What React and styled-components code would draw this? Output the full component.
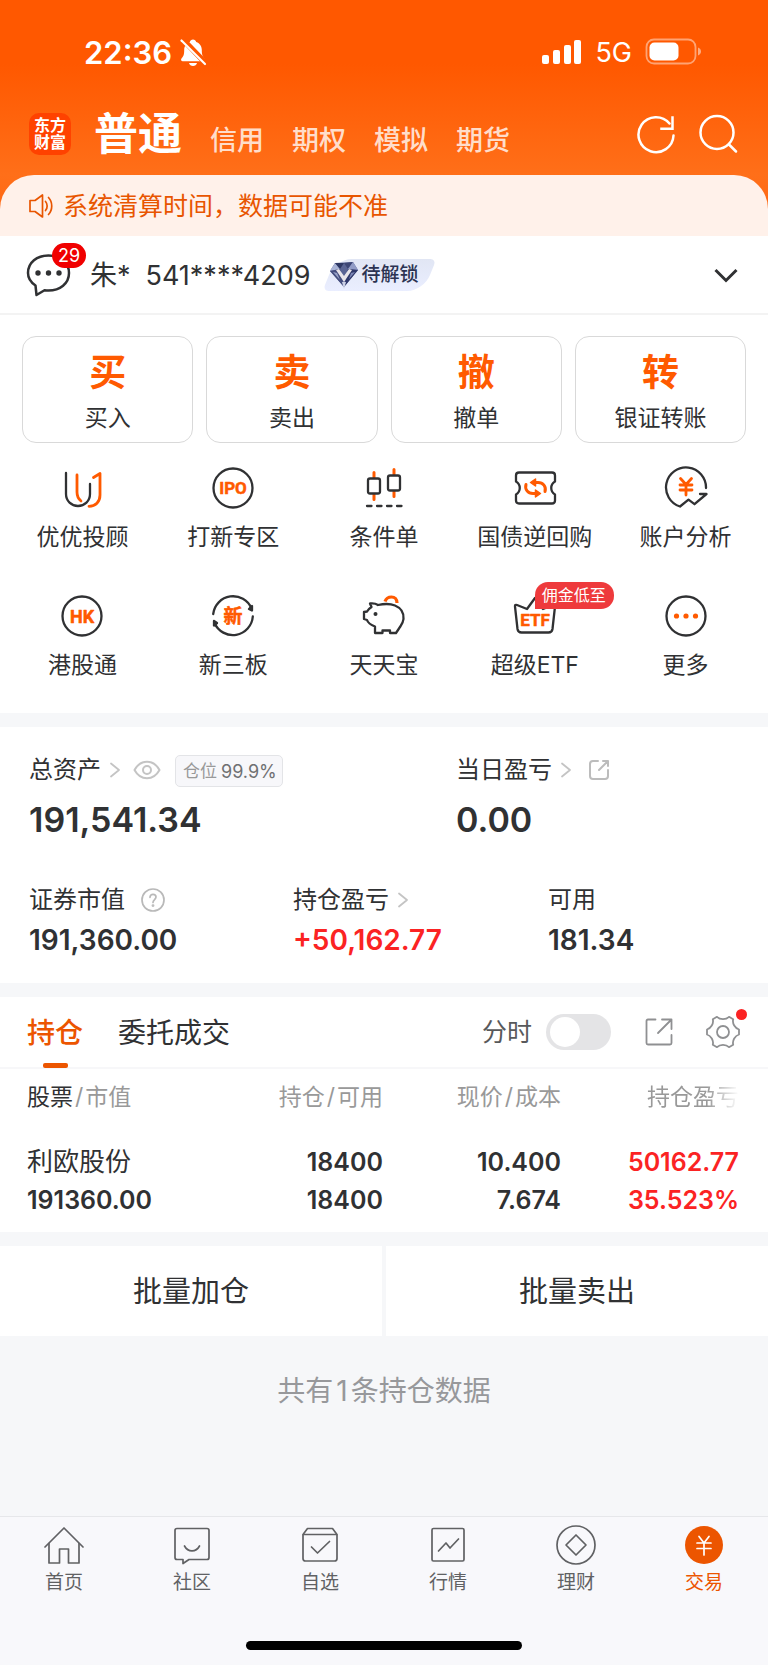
import React, { useState } from "react";
import styled, { createGlobalStyle, css } from "styled-components";

const FONT = 'Inter, "Noto Sans CJK SC", sans-serif';
const INK = "#303133";
const ORANGE = "#ff5a00";
const ACCENT = "#ec5500";
const RED = "#fb2323";
const BAND = "#f6f7f9";

const GlobalStyle = createGlobalStyle`
  *, *::before, *::after { box-sizing: border-box; }
  body { margin: 0; background: ${BAND}; color: ${INK}; font-family: ${FONT}; }
  button, input { font: inherit; color: inherit; margin: 0; }
  button { border: 0; padding: 0; background: none; cursor: pointer; }
  a { color: inherit; text-decoration: none; }
  svg { display: block; flex: none; }
`;

const Page = styled.div`
  display: flex;
  flex-direction: column;
  min-height: 100vh;
`;

/* Header */

const Header = styled.header`
  background: linear-gradient(#ff5800 0, #ff5800 64px, #ff6f19 175px, #ff6410 236px);
`;

const StatusBar = styled.div`
  display: flex;
  align-items: center;
  justify-content: space-between;
  height: 104px;
  padding: 0 66px 0 84px;
  color: #fff;
`;

const StatusGroup = styled.div`
  display: flex;
  align-items: center;
  gap: ${(p) => p.$gap}px;
`;

const Clock = styled.span`
  padding-top: 2px;
  font-size: 31px;
  line-height: 36px;
  font-weight: 600;
`;

const Network = styled.span`
  padding-top: 2px;
  font-size: 27px;
  line-height: 36px;
  font-weight: 400;
`;

const Nav = styled.nav`
  display: flex;
  align-items: center;
  height: 71px;
  padding: 0 30px 11px 29px;
`;

const Logo = styled.a`
  display: flex;
  align-items: center;
  justify-content: center;
  width: 42px;
  height: 42px;
  border-radius: 10px;
  background: #ff4200;
  color: #fff;
  font-size: 16px;
  line-height: 17px;
  font-weight: 700;
  text-align: center;
`;

const AccountTabs = styled.div`
  display: flex;
  align-items: baseline;
  flex: 1;
  gap: 28px;
  margin-left: 23px;
  padding-top: 7px;
`;

const AccountTab = styled.button`
  color: ${(p) => (p.$active ? "#fff" : "rgba(255,255,255,.8)")};
  font-size: ${(p) => (p.$active ? 44 : 27)}px;
  line-height: 58px;
  font-weight: ${(p) => (p.$active ? 700 : 500)};
`;

const NavActions = styled.div`
  display: flex;
  gap: 22px;
`;

const Notice = styled.div`
  display: flex;
  align-items: center;
  gap: 9px;
  height: 61px;
  padding: 0 28px;
  border-radius: 34px 34px 0 0;
  background: #fff1ea;
  color: #e85500;
  font-size: 25px;
  line-height: 32px;
`;

/* Account */

const Panel = styled.section`
  background: #fff;
  margin-bottom: 14px;
`;

const Account = styled.div`
  display: flex;
  align-items: center;
  height: 79px;
  padding: 0 29px 0 26px;
  border-bottom: 2px solid #f3f3f3;
`;

const Messages = styled.button`
  position: relative;
`;

const Count = styled.span`
  position: absolute;
  left: 26px;
  top: -9px;
  height: 25px;
  padding: 0 6px;
  border-radius: 13px;
  background: #f00000;
  color: #fff;
  font-size: 18px;
  line-height: 25px;
`;

const AccountName = styled.div`
  display: flex;
  gap: 15px;
  flex: none;
  margin-left: 18px;
  padding-top: 2px;
  font-size: 27px;
  line-height: 36px;
`;

const Level = styled.button`
  position: relative;
  display: flex;
  align-items: center;
  gap: 2px;
  height: 32px;
  margin: 0 auto 0 15px;
  padding: 0 16px 0 4px;
  color: #2c3352;
  font-size: 19px;
  line-height: 32px;
  font-weight: 500;
  isolation: isolate;

  &::before {
    content: "";
    position: absolute;
    z-index: -1;
    inset: 0 4px;
    border-radius: 16px 6px 16px 6px;
    background: linear-gradient(#e1e6f4, #eaeeff);
    transform: skewX(-22deg);
  }
`;

/* Trading shortcuts */

const TradeRow = styled.div`
  display: grid;
  grid-template-columns: repeat(4, 1fr);
  gap: 13px;
  padding: 21px 22px 0;
`;

const TradeCard = styled.button`
  display: flex;
  flex-direction: column;
  align-items: center;
  height: 107px;
  padding-top: 13px;
  border: 1px solid #d9d9d9;
  border-radius: 14px;
`;

const TradeMark = styled.span`
  color: ${ORANGE};
  font-size: 37px;
  line-height: 46px;
  font-weight: 700;
`;

const Label = styled.span`
  font-size: 23px;
  line-height: 32px;
`;

const TradeLabel = styled(Label)`
  margin-top: 6px;
`;

const Tools = styled.div`
  display: grid;
  grid-template-columns: repeat(5, 1fr);
  row-gap: 30px;
  padding: 23px 7px 21px;
`;

const Tool = styled.a`
  position: relative;
  display: flex;
  flex-direction: column;
  align-items: center;
  gap: 11px;
  height: 98px;
`;

const ToolIcon = styled.span`
  position: relative;
  height: 44px;
`;

const Promo = styled.span`
  position: absolute;
  left: 22px;
  top: -12px;
  height: 27px;
  padding: 0 8px 0 7px;
  border-radius: 13px 13px 13px 0;
  background: #ee3a3c;
  color: #fff;
  font-size: 16px;
  line-height: 27px;
  white-space: nowrap;
`;

/* Assets */

const Assets = styled(Panel)`
  padding: 25px 0 23px 29px;
`;

const Figures = styled.dl`
  display: grid;
  grid-template-columns: ${(p) => p.$columns};
  margin: 0;
`;

const FigureLabel = styled.dt`
  display: flex;
  align-items: center;
  height: 36px;
  font-size: 24px;
  line-height: 36px;

  svg { margin-left: 8px; }
`;

const IconButton = styled.button`
  svg { margin-left: ${(p) => p.$gap}px; }
`;

const FigureValue = styled.dd`
  margin: ${(p) => (p.$large ? "12px 0 42px" : "2px 0 0")};
  color: ${(p) => (p.$gain ? RED : INK)};
  font-size: ${(p) => (p.$large ? 34 : 28)}px;
  line-height: 40px;
  font-weight: 600;
`;

const Ratio = styled.span`
  display: flex;
  gap: 4px;
  height: 32px;
  margin: 2px 0 0 14px;
  padding: 0 5px 0 7px;
  border: 1px solid #e3e4e7;
  border-radius: 5px;
  background: #f7f7fa;
  color: #6f7072;
  font-size: 18px;
  line-height: 31px;
`;

const RatioName = styled.span`
  color: #999;
  font-size: 17px;
`;

/* Positions */

const TabRow = styled.div`
  display: flex;
  align-items: center;
  height: 72px;
  padding: 0 28px 0 27px;
  border-bottom: 2px solid #f7f7f9;
`;

const Tab = styled.button`
  position: relative;
  height: 71px;
  margin-right: 35px;
  font-size: 28px;
  line-height: 73px;
  ${(p) =>
    p.$active &&
    css`
      color: ${ACCENT};
      font-weight: 500;

      &::after {
        content: "";
        position: absolute;
        left: 50%;
        bottom: 0;
        width: 25px;
        height: 5px;
        margin-left: -12px;
        border-radius: 2px;
        background: ${ACCENT};
      }
    `}
`;

const SwitchLabel = styled.label`
  display: flex;
  align-items: center;
  gap: 14px;
  margin: 0 33px 0 auto;
  color: #58595b;
  font-size: 25px;
  line-height: 36px;
`;

const Switch = styled.input`
  appearance: none;
  width: 65px;
  height: 36px;
  border-radius: 18px;
  background: #e4e4e6;
  cursor: pointer;

  &::before {
    content: "";
    display: block;
    width: 30px;
    height: 30px;
    margin: 3px 4px;
    border-radius: 50%;
    background: #fff;
  }

  &:checked { background: ${ACCENT}; }
  &:checked::before { margin-left: 31px; }
`;

const Settings = styled.button`
  position: relative;
  margin-left: 32px;
`;

const Dot = styled.span`
  position: absolute;
  top: -6px;
  right: -7px;
  width: 11px;
  height: 11px;
  border-radius: 50%;
  background: ${RED};
`;

const TableWrap = styled.div`
  padding: 12px 29px 13px 27px;
`;

const Positions = styled.table`
  width: 100%;
  table-layout: fixed;
  border-collapse: collapse;
  text-align: right;

  th, td { padding: 0; white-space: nowrap; }
  th:first-child, td:first-child { text-align: left; }
`;

const Heading = styled.th`
  height: 32px;
  color: #999;
  font-size: 23px;
  line-height: 32px;
  font-weight: 400;
  ${(p) =>
    p.$fade &&
    css`
      mask-image: linear-gradient(to left, transparent, #000 32px);
    `}
`;

const Strong = styled.span`
  color: ${INK};
`;

const Slash = styled.span`
  margin: 0 2px;
`;

const Cell = styled.td`
  padding-top: 30px !important;
  color: ${(p) => (p.$gain ? RED : INK)};
  font-size: 25px;
  line-height: 38px;
  font-weight: 600;
`;

const Value = styled.div`
  height: 38px;
`;

const StockName = styled(Value)`
  font-size: 26px;
  font-weight: 400;
`;

const Bulk = styled.div`
  display: grid;
  grid-template-columns: 1fr 1fr;
  gap: 4px;
`;

const BulkButton = styled.button`
  height: 90px;
  padding-top: 2px;
  background: #fff;
  font-size: 29px;
  line-height: 36px;
`;

const Summary = styled.p`
  flex: 1;
  margin: 0;
  padding: 35px 0 60px;
  color: #97989b;
  font-size: 28px;
  line-height: 40px;
  text-align: center;
`;

const Total = styled.span`
  margin: 0 3px;
`;

/* Bottom navigation */

const BottomBar = styled.footer`
  border-top: 1px solid #e6e7ea;
  background: #f8f8fb;
`;

const BottomNav = styled.nav`
  display: grid;
  grid-template-columns: repeat(6, 1fr);
  padding-top: 8px;
`;

const BottomLink = styled.a`
  display: flex;
  flex-direction: column;
  align-items: center;
  gap: 6px;
  color: ${(p) => (p.$active ? ACCENT : "#606163")};
  font-size: 19px;
  line-height: 24px;
`;

const HomeIndicator = styled.div`
  width: 36%;
  height: 9px;
  margin: 46px auto 15px;
  border-radius: 5px;
  background: #000;
`;

/* Icons */

const Svg = ({ w, h = w, sw = 2, color = INK, children }) => (
  <svg
    width={w}
    height={h}
    viewBox={`0 0 ${w} ${h}`}
    fill="none"
    stroke={color}
    strokeWidth={sw}
    strokeLinecap="round"
    strokeLinejoin="round"
    aria-hidden="true"
  >
    {children}
  </svg>
);

const Word = ({ y = 28, size = 17, children }) => (
  <text
    x="22"
    y={y}
    textAnchor="middle"
    fill={ORANGE}
    stroke={ORANGE}
    strokeWidth=".5"
    fontFamily='Roboto, "Noto Sans CJK SC", sans-serif'
    fontWeight="700"
    fontSize={size}
  >
    {children}
  </text>
);

const MutedBell = () => (
  <Svg w={28} h={30} color="none">
    <g fill="#fff">
      <path d="M14 2.5c-1.6 0-2.8 1-3.2 2.4C7 6.200 5.200 9.400 5.200 13c0 5-1 6.600-2.700 8.400-.9 1-.4 2.800 1.200 2.800h20.600c1.600 0 2.100-1.800 1.200-2.800C23.800 19.600 22.800 18 22.800 13c0-3.600-1.800-6.800-5.600-8.100C16.800 3.500 15.600 2.500 14 2.500z" />
      <path d="M10 26h8c-.5 1.800-2 3-4 3s-3.500-1.200-4-3z" />
    </g>
    <path d="M3 1.500l24 25" stroke="#ff5800" strokeWidth="5.500" />
    <path d="M2.500 3.500l23.500 23.500" stroke="#fff" strokeWidth="2.200" />
  </Svg>
);

const Signal = () => (
  <Svg w={40} h={26} color="none">
    <g fill="#fff">
      <rect x="0" y="16" width="7" height="9" rx="2" />
      <rect x="11" y="11" width="7" height="14" rx="2" />
      <rect x="22" y="6" width="7" height="19" rx="2" />
      <rect x="32" y="1" width="7" height="24" rx="2" />
    </g>
  </Svg>
);

const Battery = () => (
  <Svg w={57} h={28} color="none">
    <rect x="1.500" y="1.500" width="49" height="24" rx="7.500" stroke="#fff" strokeOpacity=".45" strokeWidth="1.800" />
    <rect x="4.500" y="4.500" width="29" height="18" rx="5" fill="#fff" />
    <path d="M53 9.500c2 .8 3 2.200 3 4s-1 3.200-3 4z" fill="#fff" fillOpacity=".5" />
  </Svg>
);

const Refresh = () => (
  <Svg w={40} color="#fff" sw={2.5}>
    <path d="M37.500 21.500A17.500 17.500 0 1 1 33.500 9.500" />
    <path d="M36.500 3.500v11.300H25.500" strokeLinecap="square" strokeLinejoin="miter" />
  </Svg>
);

const Search = () => (
  <Svg w={40} color="#fff" sw={2.5}>
    <circle cx="19" cy="18.500" r="16.500" />
    <path d="M31 30.500l7 7" />
  </Svg>
);

const Speaker = () => (
  <Svg w={26} color="#e85500" sw={1.7}>
    <path d="M2 7.500h5L14.500 2v22L7 18.500H2z" />
    <path d="M17.500 8.500c2.200 2.500 2.200 6.500 0 9M20.500 4.500c4.300 4.500 4.300 12.500 0 17" />
  </Svg>
);

const Chat = () => (
  <Svg w={46} sw={2.5}>
    <path d="M9.500 33.500C5 30.500 2 26.200 2 21 2 10.500 11 3.500 22.500 3.500S43 10.500 43 21 34 38.500 22.500 38.500q-2 0-4-.3l-8 4.800z" />
    <g fill={INK} stroke="none">
      <circle cx="12" cy="21" r="2.700" />
      <circle cx="22.500" cy="21" r="2.700" />
      <circle cx="33" cy="21" r="2.700" />
    </g>
  </Svg>
);

const Diamond = () => (
  <Svg w={30} h={30} color="none">
    <path d="M6 3l18-1 5 8-14 17L1 11z" fill="#5a6494" />
    <path d="M6 3l5 6-10 2z" fill="#aab4d6" />
    <path d="M6 3h9l-4 6z" fill="#2e3763" />
    <path d="M15 3l9-1-5 7z" fill="#3d4675" />
    <path d="M24 2l5 8-10-1z" fill="#929cc6" />
    <path d="M1 11l10-2 4 18z" fill="#454e7e" />
    <path d="M4 12l4 1 3 7z" fill="#98a2c8" />
    <path d="M29 10l-10-1-4 18z" fill="#2f386a" />
    <path d="M26 12l-4 1-2 6z" fill="#7e88b8" />
    <path d="M10 9l5 7 5-7 3 1-8 12-8-12z" fill="#e9e5ea" />
    <path d="M13 22l2 7 2-7z" fill="#ccd1e6" />
  </Svg>
);

const ChevronDown = () => (
  <Svg w={26} sw={3}>
    <path d="M2.500 8L13 18.500 23.500 8" strokeLinecap="butt" strokeLinejoin="miter" />
  </Svg>
);

const Chevron = () => (
  <Svg w={12} h={18} color="#c4c4c4" sw={1.8}>
    <path d="M2 2.500l8 6.500-8 6.500" />
  </Svg>
);

const Eye = () => (
  <Svg w={28} h={20} color="#c4c4c4">
    <path d="M1.500 10C4.500 4.500 9 1.800 14 1.800S23.500 4.500 26.500 10C23.500 15.500 19 18.200 14 18.200S4.500 15.500 1.500 10z" />
    <circle cx="14" cy="10" r="4" />
  </Svg>
);

const Question = () => (
  <Svg w={24} color="#b9b9b9" sw={1.7}>
    <circle cx="12" cy="12" r="11" />
    <path d="M9 9.300C9 7.500 10.300 6.300 12 6.300s3 1.200 3 2.800c0 2.400-3 2.600-3 5.400" />
    <circle cx="12" cy="17.600" r=".6" />
  </Svg>
);

const ShareSmall = () => (
  <Svg w={22} color="#bcbcbc">
    <path d="M10 2H5C3 2 2 3 2 5v12c0 2 1 3 3 3h12c2 0 3-1 3-3v-6" />
    <path d="M11 11l9-9M15 2h5v5" />
  </Svg>
);

const Share = () => (
  <Svg w={30} color="#8f9092" sw={1.8}>
    <path d="M11.500 2.500H4q-1.500 0-1.500 1.500v22q0 1.500 1.500 1.500h22q1.500 0 1.500-1.500v-8" />
    <path d="M14 16L27.500 2.500M18 2.500h9.500V12" />
  </Svg>
);

const Gear = () => (
  <Svg w={34} color="#8f9092" sw={1.8}>
    <path d="M11 1.800c1.600 1.600 3.500 2.300 6 2.300s4.400-.7 6-2.300l4.200 2.400c-.6 2.300-.2 4.200 1 6.300 1.200 2 2.700 3.300 4.800 4v5c-2.100.7-3.600 2-4.800 4-1.200 2.100-1.600 4-1 6.300L23 32.200c-1.600-1.600-3.500-2.300-6-2.300s-4.400.7-6 2.300l-4.200-2.400c.6-2.300.2-4.200-1-6.300-1.200-2-2.700-3.300-4.800-4v-5c2.100-.7 3.600-2 4.800-4 1.200-2.100 1.600-4 1-6.300z" />
    <circle cx="17" cy="17" r="6" />
  </Svg>
);

const TOOL_STROKE = 2.3;

const toolIcons = {
  advisor: (
    <Svg w={44} sw={TOOL_STROKE}>
      <path d="M6 7v21c0 7 5.500 12 12 12s12-5 12-12V18" />
      <g stroke={ORANGE} strokeWidth="2.800">
        <path d="M17 9v17c0 4 1.500 7 4 9" />
        <path d="M33.500 11.500l6.500-4V29c0 7-4.500 11.300-11 11.300" />
      </g>
    </Svg>
  ),
  ipo: (
    <Svg w={44} sw={TOOL_STROKE}>
      <circle cx="22" cy="22" r="19.500" />
      <Word size={17}>IPO</Word>
    </Svg>
  ),
  orders: (
    <Svg w={44} sw={TOOL_STROKE}>
      <g stroke={ORANGE} strokeWidth="3">
        <path d="M12 6.500v5M12 28.500v5M32 3.500v5M32 25.500v5" />
      </g>
      <rect x="6" y="12.500" width="12" height="15" rx="2" />
      <rect x="26" y="9.500" width="12" height="15" rx="2" />
      <path d="M5 40h35" strokeDasharray="4.500 5.500" />
    </Svg>
  ),
  repo: (
    <Svg w={44} sw={TOOL_STROKE}>
      <path d="M6 6.500h33c2 0 3 1 3 3v6c-5 3-5 10 0 13v6c0 2-1 3-3 3H6c-2 0-3-1-3-3v-6c5-3 5-10 0-13v-6c0-2 1-3 3-3z" />
      <g stroke={ORANGE} strokeWidth="3">
        <path d="M32 25.500c1.500-5-2-9-7-9h-3M13 18.500c-1.500 5 2 9 7 9h3" />
        <path d="M22.500 13v7l-5-3.500zM22.500 24v7l5-3.500z" fill={ORANGE} strokeWidth="1.500" />
      </g>
    </Svg>
  ),
  analysis: (
    <Svg w={44} sw={TOOL_STROKE}>
      <path d="M42 22A20 20 0 1 0 16 40.500l8.500-6.800 6 4.500L42.500 28H36" />
      <path d="M16.500 12.500l5.500 6 5.500-6M22 18.500V29M16 19h12M16 24h12" stroke={ORANGE} strokeWidth="2.800" />
    </Svg>
  ),
  hk: (
    <Svg w={44} sw={TOOL_STROKE}>
      <circle cx="22" cy="22" r="19.500" />
      <Word size={18} y={28.5}>HK</Word>
    </Svg>
  ),
  neeq: (
    <Svg w={44} sw={TOOL_STROKE}>
      <path d="M2.200 20A20 20 0 0 1 40.500 14.500M41.800 22.500A20 20 0 0 1 3.500 29" />
      <path d="M41 12v4.500l-3-1.500zM3 31.500V27l3 2z" fill={INK} />
      <Word size={19} y={29}>新</Word>
    </Svg>
  ),
  piggy: (
    <Svg w={44} sw={TOOL_STROKE}>
      <path d="M23 7.500C24 4.500 26.500 3 29.500 3c3.300 0 5.500 2.500 5.500 6" stroke={ORANGE} strokeWidth="3.200" strokeLinecap="butt" />
      <path d="M8 9.500c4-.5 6 .2 8 1.500 6-1.300 12-1.500 17 .5 6 2.500 9 7.500 8.500 13.500-.4 4.500-3 7-4.500 9.500l-3 4.500h-6v-2.500h-7.500V39h-7.500v-6.500C9 31 6 29 5 26l-3-1v-7l3-.5c1-2 3-3.500 4.500-4.500z" />
      <circle cx="13.500" cy="20" r="2" fill={INK} stroke="none" />
    </Svg>
  ),
  etf: (
    <Svg w={44} sw={TOOL_STROKE}>
      <path d="M2 12.500c-.2-1.500.5-2 2-1.500L14 15l8-11 8 11 10-4c1.500-.5 2.200 0 2 1.500L39.500 35c-.4 2.500-1.500 3.500-4 3.500h-27c-2.500 0-3.600-1-4-3.500z" />
      <Word size={17} y={32}>ETF</Word>
    </Svg>
  ),
  more: (
    <Svg w={44} sw={TOOL_STROKE}>
      <circle cx="22" cy="22" r="19.500" />
      <g fill={ORANGE} stroke="none">
        <circle cx="12.500" cy="22" r="2.600" />
        <circle cx="22" cy="22" r="2.600" />
        <circle cx="31.500" cy="22" r="2.600" />
      </g>
    </Svg>
  ),
};

const NavSvg = ({ children, color = "#606163" }) => (
  <Svg w={40} color={color} sw={1.7}>
    {children}
  </Svg>
);

const navIcons = {
  home: (
    <NavSvg>
      <path d="M1 22L20 3l19 19" />
      <path d="M5 18.500V38h10.500V24h9v14H35V18.500" />
    </NavSvg>
  ),
  community: (
    <NavSvg>
      <path d="M5 3.500h30q2 0 2 2v27q0 2-2 2H17l-6 4v-4H5q-2 0-2-2v-27q0-2 2-2z" />
      <path d="M12.500 21c3.500 6.500 11.500 6.500 15 0" />
    </NavSvg>
  ),
  watchlist: (
    <NavSvg>
      <path d="M7.500 3.500h25l4.500 6v24q0 2.500-2.500 2.500h-29Q3 36 3 33.500v-24z" />
      <path d="M3.500 9.500h33M11.500 22l6 6 12-11.500" />
    </NavSvg>
  ),
  market: (
    <NavSvg>
      <rect x="4" y="3.500" width="32" height="32.500" rx="1.500" />
      <path d="M10.500 26l7.500-8 4 5 8.500-9" />
    </NavSvg>
  ),
  wealth: (
    <NavSvg>
      <circle cx="20" cy="20" r="19" />
      <path d="M20 10l10 10-10 10-10-10z" />
    </NavSvg>
  ),
  trade: (
    <NavSvg color="#fff">
      <circle cx="20" cy="20" r="19" fill={ACCENT} stroke="none" />
      <path d="M15 11.500l5 6.500 5-6.500M20 18v12M13 18h14M13 23.500h14" />
    </NavSvg>
  ),
};

/* Data */

const accountTabs = ["普通", "信用", "期权", "模拟", "期货"];

const trades = [
  ["买", "买入"],
  ["卖", "卖出"],
  ["撤", "撤单"],
  ["转", "银证转账"],
];

const tools = [
  ["advisor", "优优投顾"],
  ["ipo", "打新专区"],
  ["orders", "条件单"],
  ["repo", "国债逆回购"],
  ["analysis", "账户分析"],
  ["hk", "港股通"],
  ["neeq", "新三板"],
  ["piggy", "天天宝"],
  ["etf", "超级ETF", "佣金低至"],
  ["more", "更多"],
];

const navItems = [
  ["home", "首页"],
  ["community", "社区"],
  ["watchlist", "自选"],
  ["market", "行情"],
  ["wealth", "理财"],
  ["trade", "交易"],
];

export default function App() {
  const [intraday, setIntraday] = useState(false);

  return (
    <Page lang="zh-CN">
      <GlobalStyle />
      <Header>
        <StatusBar>
          <StatusGroup $gap={7}>
            <Clock>22:36</Clock>
            <MutedBell />
          </StatusGroup>
          <StatusGroup $gap={13}>
            <Signal />
            <Network>5G</Network>
            <Battery />
          </StatusGroup>
        </StatusBar>
        <Nav>
          <Logo href="#home">
            东方
            <br />
            财富
          </Logo>
          <AccountTabs>
            {accountTabs.map((name, i) => (
              <AccountTab key={name} type="button" $active={i === 0}>
                {name}
              </AccountTab>
            ))}
          </AccountTabs>
          <NavActions>
            <button type="button" aria-label="刷新">
              <Refresh />
            </button>
            <button type="button" aria-label="搜索">
              <Search />
            </button>
          </NavActions>
        </Nav>
        <Notice>
          <Speaker />
          系统清算时间，数据可能不准
        </Notice>
      </Header>

      <Panel>
        <Account>
          <Messages type="button" aria-label="消息">
            <Chat />
            <Count>29</Count>
          </Messages>
          <AccountName>
            <span>朱*</span>
            <span>541****4209</span>
          </AccountName>
          <Level type="button">
            <Diamond />
            待解锁
          </Level>
          <button type="button" aria-label="展开账户">
            <ChevronDown />
          </button>
        </Account>
        <TradeRow>
          {trades.map(([mark, label]) => (
            <TradeCard key={label} type="button">
              <TradeMark>{mark}</TradeMark>
              <TradeLabel>{label}</TradeLabel>
            </TradeCard>
          ))}
        </TradeRow>
        <Tools>
          {tools.map(([icon, label, promo]) => (
            <Tool key={icon} href={`#${icon}`}>
              <ToolIcon>
                {toolIcons[icon]}
                {promo && <Promo>{promo}</Promo>}
              </ToolIcon>
              <Label>{label}</Label>
            </Tool>
          ))}
        </Tools>
      </Panel>

      <Assets>
        <Figures $columns="427fr 312fr">
          <div>
            <FigureLabel>
              总资产
              <Chevron />
              <IconButton type="button" aria-label="隐藏金额" $gap={12}>
                <Eye />
              </IconButton>
              <Ratio>
                <RatioName>仓位</RatioName>99.9%
              </Ratio>
            </FigureLabel>
            <FigureValue $large>191,541.34</FigureValue>
          </div>
          <div>
            <FigureLabel>
              当日盈亏
              <Chevron />
              <IconButton type="button" aria-label="分享当日盈亏" $gap={16}>
                <ShareSmall />
              </IconButton>
            </FigureLabel>
            <FigureValue $large>0.00</FigureValue>
          </div>
        </Figures>
        <Figures $columns="264fr 255fr 220fr">
          <div>
            <FigureLabel>
              证券市值
              <IconButton type="button" aria-label="说明" $gap={16}>
                <Question />
              </IconButton>
            </FigureLabel>
            <FigureValue>191,360.00</FigureValue>
          </div>
          <div>
            <FigureLabel>
              持仓盈亏
              <Chevron />
            </FigureLabel>
            <FigureValue $gain>+50,162.77</FigureValue>
          </div>
          <div>
            <FigureLabel>可用</FigureLabel>
            <FigureValue>181.34</FigureValue>
          </div>
        </Figures>
      </Assets>

      <Panel>
        <TabRow>
          <Tab type="button" $active>
            持仓
          </Tab>
          <Tab type="button">委托成交</Tab>
          <SwitchLabel>
            分时
            <Switch
              type="checkbox"
              role="switch"
              checked={intraday}
              onChange={(e) => setIntraday(e.target.checked)}
            />
          </SwitchLabel>
          <button type="button" aria-label="分享持仓">
            <Share />
          </button>
          <Settings type="button" aria-label="设置">
            <Gear />
            <Dot />
          </Settings>
        </TabRow>
        <TableWrap>
          <Positions>
            <thead>
              <tr>
                <Heading scope="col">
                  <Strong>股票</Strong>
                  <Slash>/</Slash>市值
                </Heading>
                <Heading scope="col">
                  持仓<Slash>/</Slash>可用
                </Heading>
                <Heading scope="col">
                  现价<Slash>/</Slash>成本
                </Heading>
                <Heading scope="col" $fade>
                  持仓盈亏
                </Heading>
              </tr>
            </thead>
            <tbody>
              <tr>
                <Cell>
                  <StockName>利欧股份</StockName>
                  <Value>191360.00</Value>
                </Cell>
                <Cell>
                  <Value>18400</Value>
                  <Value>18400</Value>
                </Cell>
                <Cell>
                  <Value>10.400</Value>
                  <Value>7.674</Value>
                </Cell>
                <Cell $gain>
                  <Value>50162.77</Value>
                  <Value>35.523%</Value>
                </Cell>
              </tr>
            </tbody>
          </Positions>
        </TableWrap>
      </Panel>

      <Bulk>
        <BulkButton type="button">批量加仓</BulkButton>
        <BulkButton type="button">批量卖出</BulkButton>
      </Bulk>
      <Summary>
        共有<Total>1</Total>条持仓数据
      </Summary>

      <BottomBar>
        <BottomNav>
          {navItems.map(([icon, label]) => (
            <BottomLink key={icon} href={`#nav-${icon}`} $active={icon === "trade"}>
              {navIcons[icon]}
              {label}
            </BottomLink>
          ))}
        </BottomNav>
        <HomeIndicator />
      </BottomBar>
    </Page>
  );
}
